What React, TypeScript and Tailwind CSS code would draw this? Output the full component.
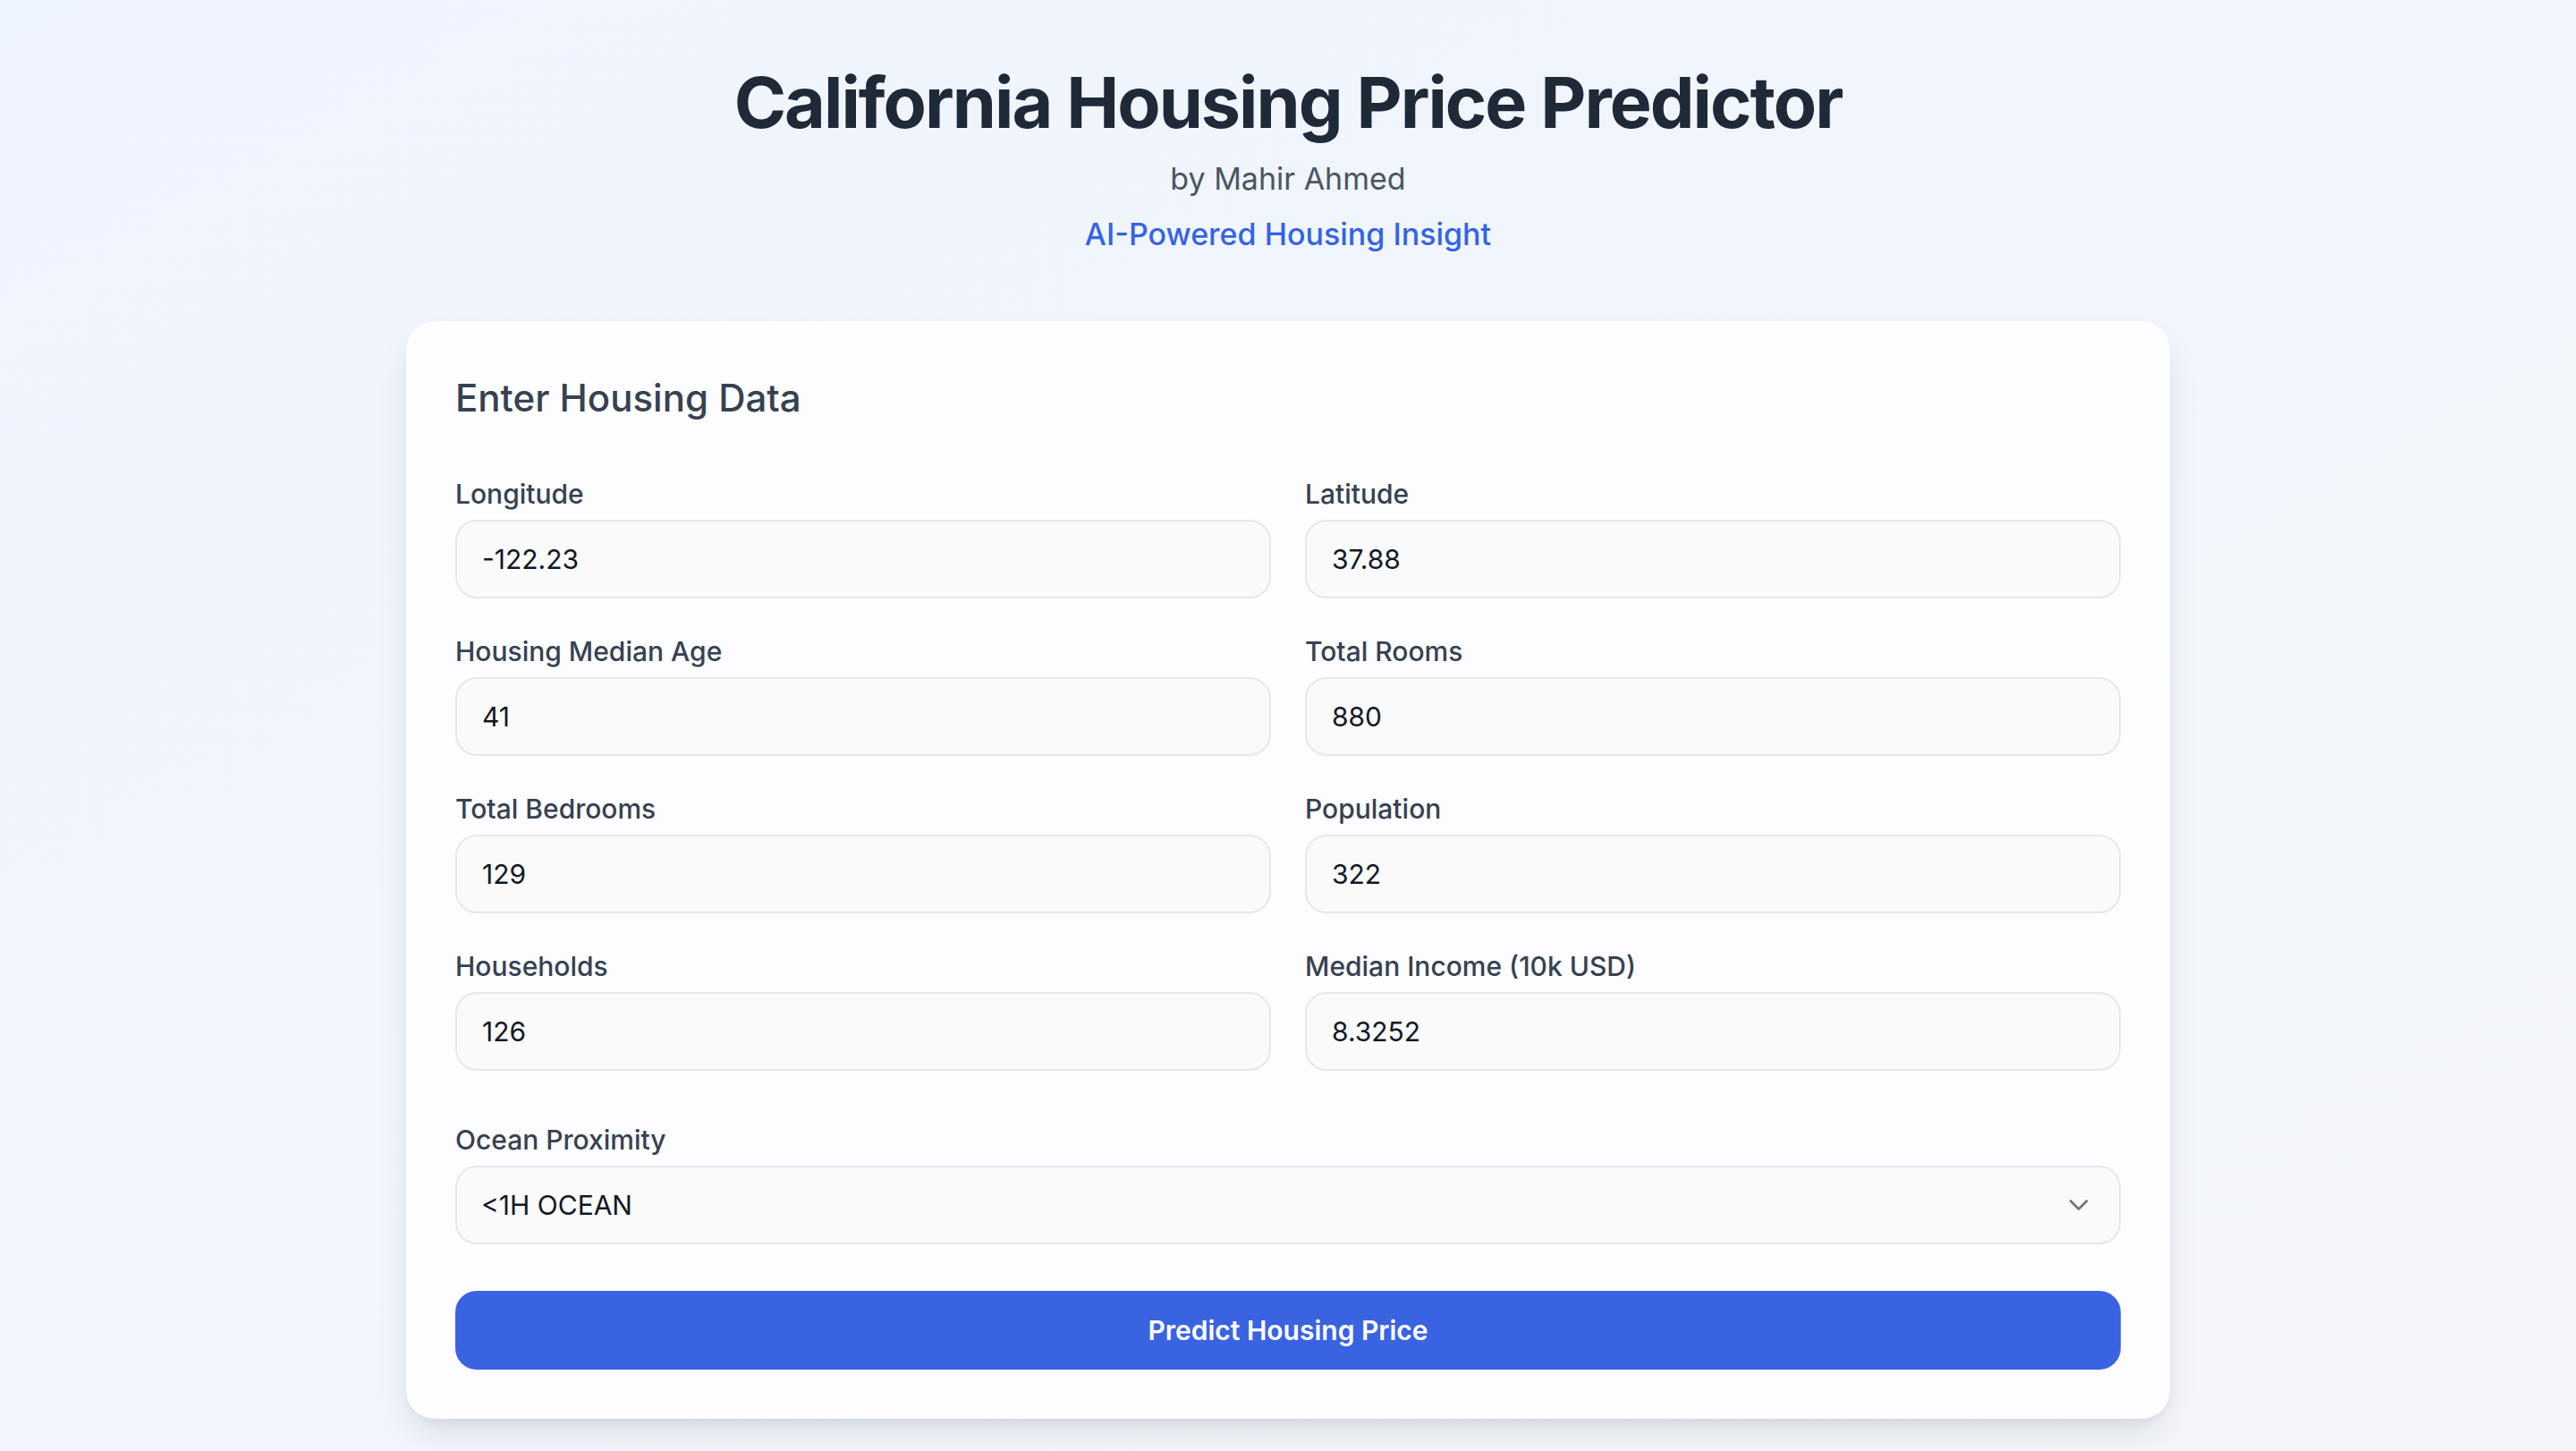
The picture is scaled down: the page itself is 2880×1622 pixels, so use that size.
const fields = [
  { label: "Longitude", value: "-122.23" },
  { label: "Latitude", value: "37.88" },
  { label: "Housing Median Age", value: "41" },
  { label: "Total Rooms", value: "880" },
  { label: "Total Bedrooms", value: "129" },
  { label: "Population", value: "322" },
  { label: "Households", value: "126" },
  { label: "Median Income (10k USD)", value: "8.3252" },
];

function Field({ label, value }: { label: string; value: string }) {
  return (
    <div className="flex flex-col">
      <label className="mb-[9px] text-[30px] leading-[40px] font-medium text-[#374151]">
        {label}
      </label>
      <input
        defaultValue={value}
        className="h-[88px] w-full rounded-[24px] border-2 border-[#e4e8ef] bg-[#fafafa] px-[28px] text-[30px] text-[#111827] outline-none"
      />
    </div>
  );
}

export default function App() {
  return (
    <div className="min-h-screen w-full bg-gradient-to-br from-[#eff5fe] to-[#f4f6fa] font-['Inter',sans-serif] flex flex-col items-center pt-[66px] pb-[36px]">
      <h1 className="text-[79px] leading-[96px] font-bold tracking-tight text-[#1f2937]">
        California Housing Price Predictor
      </h1>
      <p className="mt-[10px] text-[34px] leading-[56px] text-[#4b5563]">by Mahir Ahmed</p>
      <p className="mt-[6px] text-[34px] leading-[56px] font-medium text-[#3563e6]">
        AI-Powered Housing Insight
      </p>

      <div className="mt-[69px] w-[1972px] rounded-[32px] bg-[#fdfdff] px-[55px] pt-[56px] pb-[55px] shadow-[0_20px_40px_-8px_rgba(15,23,42,0.12),0_8px_16px_-8px_rgba(15,23,42,0.08)]">
        <h2 className="mb-[57px] text-[42px] leading-[60px] font-medium text-[#374151]">
          Enter Housing Data
        </h2>

        <div className="grid grid-cols-2 gap-x-[38px] gap-y-[39px]">
          {fields.map((f) => (
            <Field key={f.label} label={f.label} value={f.value} />
          ))}
        </div>

        <div className="mt-[57px] flex flex-col">
          <label className="mb-[9px] text-[30px] leading-[40px] font-medium text-[#374151]">
            Ocean Proximity
          </label>
          <div className="relative">
            <select
              defaultValue="<1H OCEAN"
              className="h-[88px] w-full appearance-none rounded-[24px] border-2 border-[#e4e8ef] bg-[#fafafa] px-[27px] text-[30px] text-[#111827] outline-none"
            >
              <option>{"<1H OCEAN"}</option>
              <option>INLAND</option>
              <option>ISLAND</option>
              <option>NEAR BAY</option>
              <option>NEAR OCEAN</option>
            </select>
            <svg
              className="pointer-events-none absolute right-[36px] top-1/2 -translate-y-1/2"
              width="22"
              height="13"
              viewBox="0 0 22 13"
              fill="none"
            >
              <path d="M2 2l9 9 9-9" stroke="#6b7280" strokeWidth="2.6" strokeLinecap="round" strokeLinejoin="round" />
            </svg>
          </div>
        </div>

        <button className="mt-[52px] h-[88px] w-full rounded-[24px] bg-[#3a63e2] text-[30px] font-semibold text-white">
          Predict Housing Price
        </button>
      </div>
    </div>
  );
}
